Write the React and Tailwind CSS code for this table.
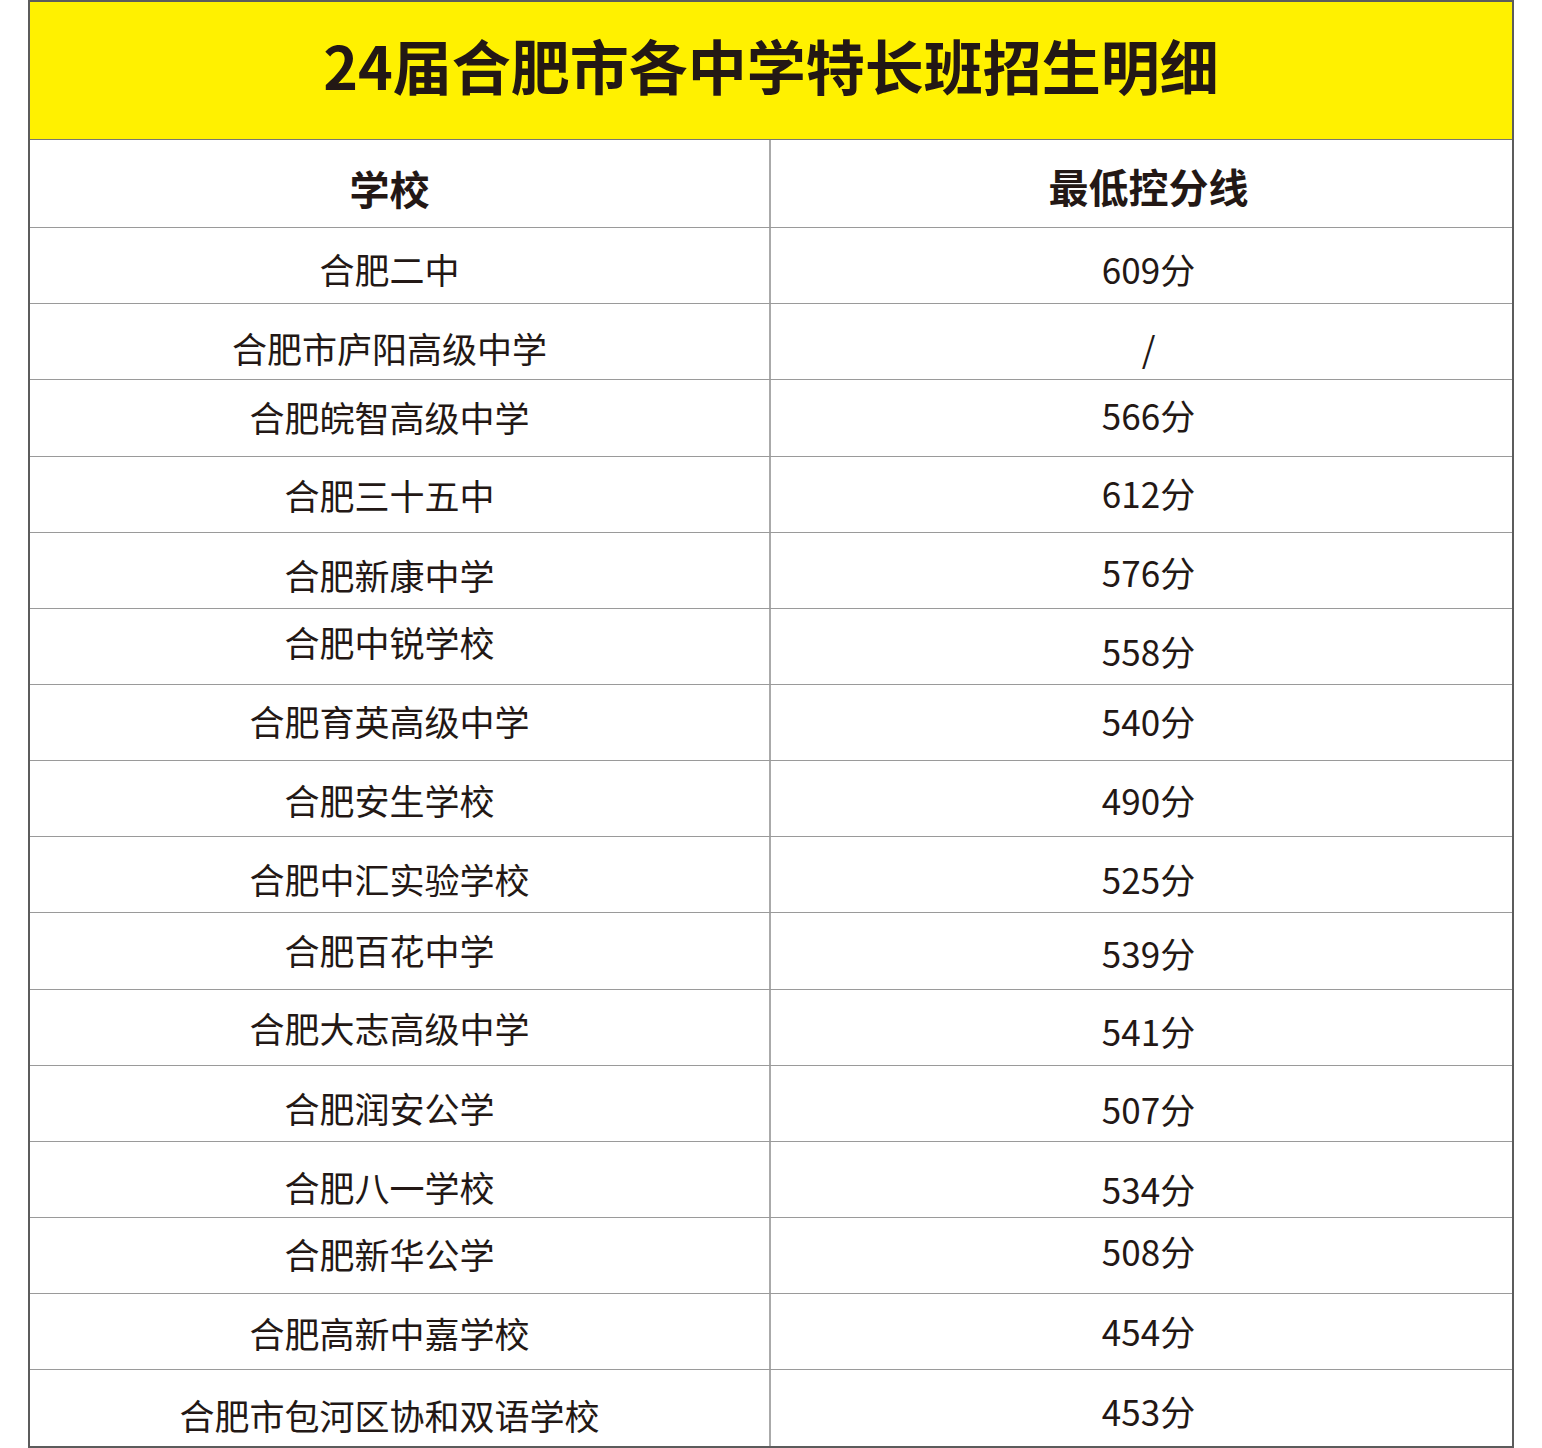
const rows = [
  { name: "合肥二中", score: "609分", h: "h-[76px]", l: "pt-[6px]", r: "pt-[6px]" },
  { name: "合肥市庐阳高级中学", score: "/", h: "h-[76px]", l: "pt-[12px]", r: "pt-[12px]" },
  { name: "合肥皖智高级中学", score: "566分", h: "h-[77px]", l: "pb-[4px]", r: "pb-[8px]" },
  { name: "合肥三十五中", score: "612分", h: "h-[76px]", l: "pt-[0px]", r: "pb-[4px]" },
  { name: "合肥新康中学", score: "576分", h: "h-[76px]", l: "pt-[8px]", r: "pt-[2px]" },
  { name: "合肥中锐学校", score: "558分", h: "h-[76px]", l: "pb-[10px]", r: "pt-[8px]" },
  { name: "合肥育英高级中学", score: "540分", h: "h-[76px]", l: "pb-[4px]", r: "pb-[4px]" },
  { name: "合肥安生学校", score: "490分", h: "h-[76px]", l: "pt-[2px]", r: "pt-[2px]" },
  { name: "合肥中汇实验学校", score: "525分", h: "h-[76px]", l: "pt-[8px]", r: "pt-[8px]" },
  { name: "合肥百花中学", score: "539分", h: "h-[77px]", l: "pb-[4px]", r: "pt-[2px]" },
  { name: "合肥大志高级中学", score: "541分", h: "h-[76px]", l: "pt-[0px]", r: "pt-[6px]" },
  { name: "合肥润安公学", score: "507分", h: "h-[76px]", l: "pt-[8px]", r: "pt-[10px]" },
  { name: "合肥八一学校", score: "534分", h: "h-[76px]", l: "pt-[14px]", r: "pt-[18px]" },
  { name: "合肥新华公学", score: "508分", h: "h-[76px]", l: "pb-[4px]", r: "pb-[10px]" },
  { name: "合肥高新中嘉学校", score: "454分", h: "h-[76px]", l: "pt-[2px]", r: "pb-[2px]" },
  { name: "合肥市包河区协和双语学校", score: "453分", h: "h-[76px]", l: "pt-[12px]", r: "pt-[4px]" },
];

export default function App() {
  return (
    <div
      className="w-[1542px] h-[1448px] bg-white text-[#231815]"
      style={{ fontFamily: '"Noto Sans CJK SC", "Noto Sans", sans-serif' }}
    >
      <div className="ml-[28px] w-[1486px] h-[1448px] border-2 border-[#5c5c5c] flex flex-col">
        <div className="h-[138px] shrink-0 bg-[#fff100] border-b border-[#777777] flex items-center justify-center">
          <h1 className="text-[59px] font-bold leading-none pb-[12px]">24届合肥市各中学特长班招生明细</h1>
        </div>
        <div className="h-[88px] shrink-0 flex border-b border-[#9a9a9a]">
          <div className="w-[741px] shrink-0 border-r-2 border-[#aaaaaa] flex items-center justify-center pr-[20px] pt-[8px]">
            <span className="text-[40px] font-bold leading-none">学校</span>
          </div>
          <div className="flex-1 flex items-center justify-center pl-[14px] pt-[4px]">
            <span className="text-[40px] font-bold leading-none">最低控分线</span>
          </div>
        </div>
        {rows.map((row, i) => (
          <div
            key={i}
            className={`${row.h} shrink-0 flex ${i === rows.length - 1 ? "" : "border-b border-[#9a9a9a]"}`}
          >
            <div className={`w-[741px] shrink-0 border-r-2 border-[#aaaaaa] flex items-center justify-center pr-[20px] ${row.l}`}>
              <span className="text-[35px] leading-none">{row.name}</span>
            </div>
            <div className={`flex-1 flex items-center justify-center pl-[14px] ${row.r}`}>
              <span className="text-[35px] leading-none">{row.score}</span>
            </div>
          </div>
        ))}
      </div>
    </div>
  );
}
